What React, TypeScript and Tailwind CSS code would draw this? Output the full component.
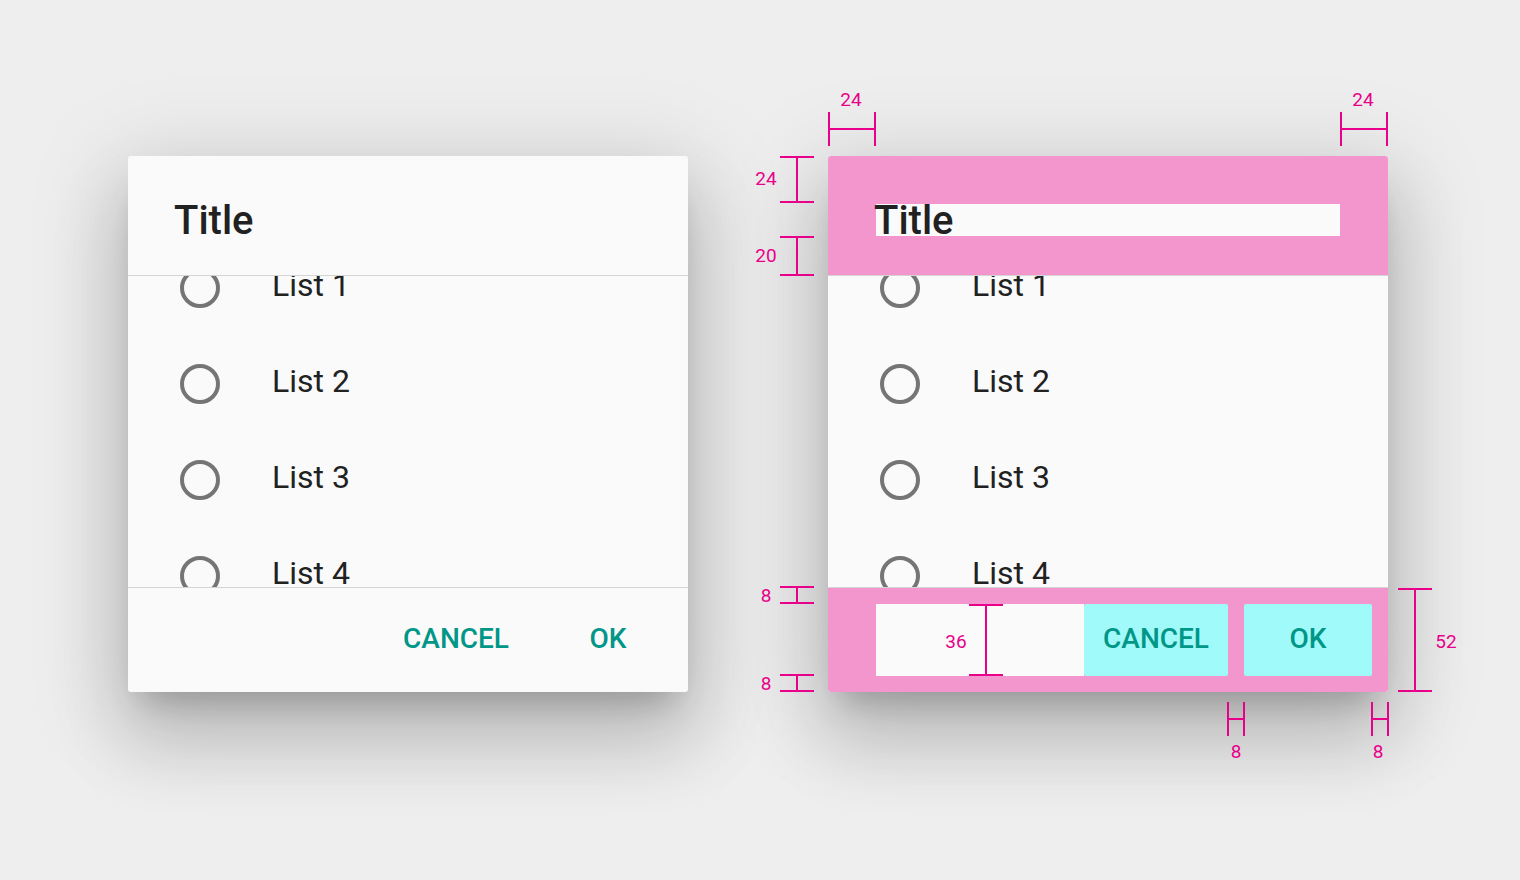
import React from "react";

const FONT = { fontFamily: "Roboto, 'Noto Sans', Arial, sans-serif" };
const ITEMS = ["List 1", "List 2", "List 3", "List 4"];
const MAG = "#e8008a";

// ── Radio ─────────────────────────────────────────────────────────────────────

function Radio() {
  return <div className="w-10 h-10 rounded-full border-4 border-[#757575] flex-shrink-0" />;
}

// ── Dialog ────────────────────────────────────────────────────────────────────

function Dialog({ annotated = false }: { annotated?: boolean }) {
  return (
    <div className="w-[560px] bg-[#fafafa] rounded-[3px] flex flex-col shadow-[0_48px_76px_6px_rgba(0,0,0,0.14),0_18px_92px_16px_rgba(0,0,0,0.12),0_22px_30px_-14px_rgba(0,0,0,0.2)] overflow-hidden">
      {/* Header */}
      <div
        className={`pt-12 pb-[39px] px-12 border-b border-[#d4d4d4] ${
          annotated ? "bg-[#f396cd]" : ""
        }`}
      >
        <div
          className={`h-8 text-[40px] leading-[34px] font-medium text-[#212121] ${
            annotated ? "bg-[#fafafa]" : ""
          }`}
        >
          <span className="-ml-[2px]">Title</span>
        </div>
      </div>

      {/* Scrolling list */}
      <div className="h-[311px] overflow-hidden">
        <div className="-mt-[36px]">
          {ITEMS.map(item => (
            <div key={item} className="h-24 flex items-center pl-[52px]">
              <Radio />
              <span className="ml-[52px] mb-[6px] text-[32px] text-[#212121] leading-none">
                {item}
              </span>
            </div>
          ))}
        </div>
      </div>

      {/* Footer */}
      <div
        className={`border-t border-[#d4d4d4] h-[105px] flex items-center pl-12 pr-4 gap-4 ${
          annotated ? "bg-[#f396cd]" : ""
        }`}
      >
        <div className={`flex-1 h-[72px] -mr-4 ${annotated ? "bg-[#fafafa]" : ""}`} />
        <button
          className={`w-[144px] h-[72px] pb-[2px] text-[28px] font-medium text-[#009688] rounded-[2px] ${
            annotated ? "bg-[#a0fafa]" : ""
          }`}
        >
          CANCEL
        </button>
        <button
          className={`w-[128px] h-[72px] pb-[2px] text-[28px] font-medium text-[#009688] rounded-[2px] ${
            annotated ? "bg-[#a0fafa]" : ""
          }`}
        >
          OK
        </button>
      </div>
    </div>
  );
}

// ── Measure marks ─────────────────────────────────────────────────────────────

function HMark({ x1, x2, y, t = 17 }: { x1: number; x2: number; y: number; t?: number }) {
  return (
    <g>
      <line x1={x1} y1={y} x2={x2} y2={y} />
      <line x1={x1} y1={y - t} x2={x1} y2={y + t} />
      <line x1={x2} y1={y - t} x2={x2} y2={y + t} />
    </g>
  );
}

function VMark({ y1, y2, x, t = 17 }: { y1: number; y2: number; x: number; t?: number }) {
  return (
    <g>
      <line x1={x} y1={y1} x2={x} y2={y2} />
      <line x1={x - t} y1={y1} x2={x + t} y2={y1} />
      <line x1={x - t} y1={y2} x2={x + t} y2={y2} />
    </g>
  );
}

function Label({ x, y, children }: { x: number; y: number; children: React.ReactNode }) {
  return (
    <text x={x} y={y} textAnchor="middle" dominantBaseline="central" stroke="none" fill={MAG}>
      {children}
    </text>
  );
}

function Annotations() {
  return (
    <svg
      className="absolute left-[-100px] top-[-100px] pointer-events-none"
      width={820}
      height={740}
      viewBox="-100 -100 820 740"
      style={{ fontFamily: "Roboto, sans-serif", fontSize: 19 }}
    >
      <g stroke={MAG} strokeWidth={2} fill="none">
        <HMark x1={1} x2={47} y={-27} />
        <HMark x1={513} x2={559} y={-27} />
        <VMark x={-31} y1={1} y2={46} />
        <VMark x={-31} y1={81} y2={119} />
        <VMark x={-31} y1={431} y2={447} />
        <VMark x={-31} y1={519} y2={535} />
        <VMark x={158} y1={449} y2={519} />
        <VMark x={587} y1={433} y2={535} />
        <HMark x1={400} x2={416} y={563} />
        <HMark x1={544} x2={560} y={563} />
      </g>
      <Label x={23} y={-57}>24</Label>
      <Label x={535} y={-57}>24</Label>
      <Label x={-62} y={22}>24</Label>
      <Label x={-62} y={99}>20</Label>
      <Label x={-62} y={439}>8</Label>
      <Label x={-62} y={527}>8</Label>
      <Label x={128} y={485}>36</Label>
      <Label x={618} y={485}>52</Label>
      <Label x={408} y={595}>8</Label>
      <Label x={550} y={595}>8</Label>
    </svg>
  );
}

// ── App ───────────────────────────────────────────────────────────────────────

export default function App() {
  return (
    <div className="w-[1520px] h-[880px] bg-[#eeeeee] overflow-hidden" style={FONT}>
      <div className="flex gap-[140px] pl-[128px] pt-[156px]">
        <Dialog />
        <div className="relative">
          <Dialog annotated />
          <Annotations />
        </div>
      </div>
    </div>
  );
}
